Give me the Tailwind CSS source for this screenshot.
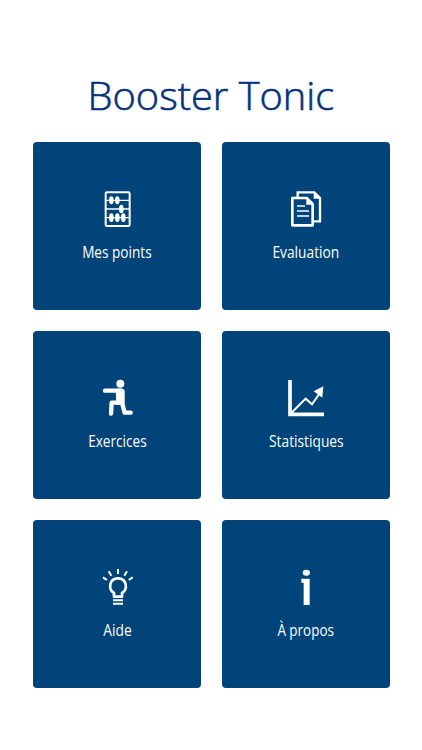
<!DOCTYPE html>
<html lang="fr">
<head>
    <meta charset="UTF-8">
    <meta name="viewport" content="width=device-width, initial-scale=1.0">
    <title>Booster Tonic</title>
    <script src="https://cdn.jsdelivr.net/npm/@tailwindcss/browser@4"></script>
</head>
<body class="min-h-screen bg-white font-['Open_Sans',sans-serif]">
    <header class="h-[142px] pt-[71px] flex justify-center">
        <h1 class="h-[48px] leading-[48px] text-[39px] font-light font-['Open_Sans',sans-serif] text-[#08327c] whitespace-nowrap scale-x-[1.02] [-webkit-text-stroke:0.6px_#08327c]">Booster Tonic</h1>
    </header>

    <main class="grid grid-cols-2 gap-[21px] w-[357px] ml-[33px]">
        <a href="#points" class="flex flex-col items-center h-[168px] pt-[38px] rounded bg-[#004479] text-white">
            <svg class="w-11 h-[55px]" viewBox="0 0 132 165" fill="none" stroke="currentColor">
                <rect x="32" y="37" width="72" height="101" rx="4" stroke-width="6"/>
                <path d="M32 61h72M32 87h72M32 113h72" stroke-width="4"/>
                <g fill="currentColor" stroke="none">
                    <ellipse cx="49" cy="61" rx="7" ry="12"/>
                    <ellipse cx="67" cy="61" rx="7" ry="12"/>
                    <ellipse cx="79" cy="87" rx="7" ry="13"/>
                    <ellipse cx="49" cy="113" rx="7" ry="13"/>
                    <ellipse cx="67" cy="113" rx="7" ry="13"/>
                    <ellipse cx="85" cy="113" rx="7" ry="13"/>
                </g>
            </svg>
            <span class="mt-[6px] text-[16px] leading-[22px] whitespace-nowrap scale-x-[0.85]">Mes points</span>
        </a>
        <a href="#evaluation" class="flex flex-col items-center h-[168px] pt-[38px] rounded bg-[#004479] text-white">
            <svg class="w-11 h-[55px]" viewBox="3 0 132 165" fill="none" stroke="currentColor">
                <path d="M44 52V37h50l17 17v70H91" stroke-width="7"/>
                <path d="M92 36l20 20H92z" fill="currentColor" stroke="none"/>
                <path d="M28 54h43l18 18v64H28z" stroke-width="8" stroke-linejoin="round"/>
                <path d="M70 52l22 22H70z" fill="currentColor" stroke="none"/>
                <path d="M42 78h24M42 93h36M42 108h36" stroke-width="4"/>
            </svg>
            <span class="mt-[6px] text-[16px] leading-[22px] whitespace-nowrap scale-x-[0.86]">Evaluation</span>
        </a>
        <a href="#exercices" class="flex flex-col items-center h-[168px] pt-[38px] rounded bg-[#004479] text-white">
            <svg class="w-11 h-[55px]" viewBox="0 -3 132 165" fill="none" stroke="currentColor">
                <circle cx="76" cy="41" r="12" fill="currentColor" stroke="none"/>
                <path d="M30 62h48" stroke-width="13" stroke-linecap="round"/>
                <path d="M62 56h19q8 0 8 8v34q0 6-6 6H64z" fill="currentColor" stroke="none"/>
                <path d="M76 98H50l-2 33M81 98l8 30h18" stroke-width="13" stroke-linecap="round" stroke-linejoin="round"/>
            </svg>
            <span class="mt-[6px] text-[16px] leading-[22px] whitespace-nowrap scale-x-[0.85]">Exercices</span>
        </a>
        <a href="#statistiques" class="flex flex-col items-center h-[168px] pt-[38px] rounded bg-[#004479] text-white">
            <svg class="w-11 h-[55px]" viewBox="3 -3 132 165" fill="none" stroke="currentColor">
                <path d="M21 30v103h102" stroke-width="11"/>
                <path d="M25 129l43-43 19 17 24-34" stroke-width="6"/>
                <path d="M121 49l-3 34-26-19z" fill="currentColor" stroke="none"/>
            </svg>
            <span class="mt-[6px] text-[16px] leading-[22px] whitespace-nowrap scale-x-[0.86]">Statistiques</span>
        </a>
        <a href="#aide" class="flex flex-col items-center h-[168px] pt-[38px] rounded bg-[#004479] text-white">
            <svg class="w-11 h-[55px]" viewBox="0 -6 132 165" fill="none" stroke="currentColor">
                <path d="M69 27v15M41 34l8 13M96 34l-8 13M24 52l12 8M113 52l-12 8" stroke-width="6"/>
                <path d="M57 110V99C38 87 43 55 69 55s31 32 12 44v11z" stroke-width="8" stroke-linejoin="round"/>
                <path d="M54 121h30M54 131h30" stroke-width="6"/>
            </svg>
            <span class="mt-[6px] text-[16px] leading-[22px] whitespace-nowrap scale-x-[0.86]">Aide</span>
        </a>
        <a href="#apropos" class="flex flex-col items-center h-[168px] pt-[38px] rounded bg-[#004479] text-white">
            <svg class="w-11 h-[55px]" viewBox="3 -6 132 165" fill="currentColor">
                <ellipse cx="70" cy="38" rx="11" ry="9"/>
                <path d="M55 56h25v79H62V68h-7z"/>
            </svg>
            <span class="mt-[6px] text-[16px] leading-[22px] whitespace-nowrap scale-x-[0.84]">À propos</span>
        </a>
    </main>
</body>
</html>
